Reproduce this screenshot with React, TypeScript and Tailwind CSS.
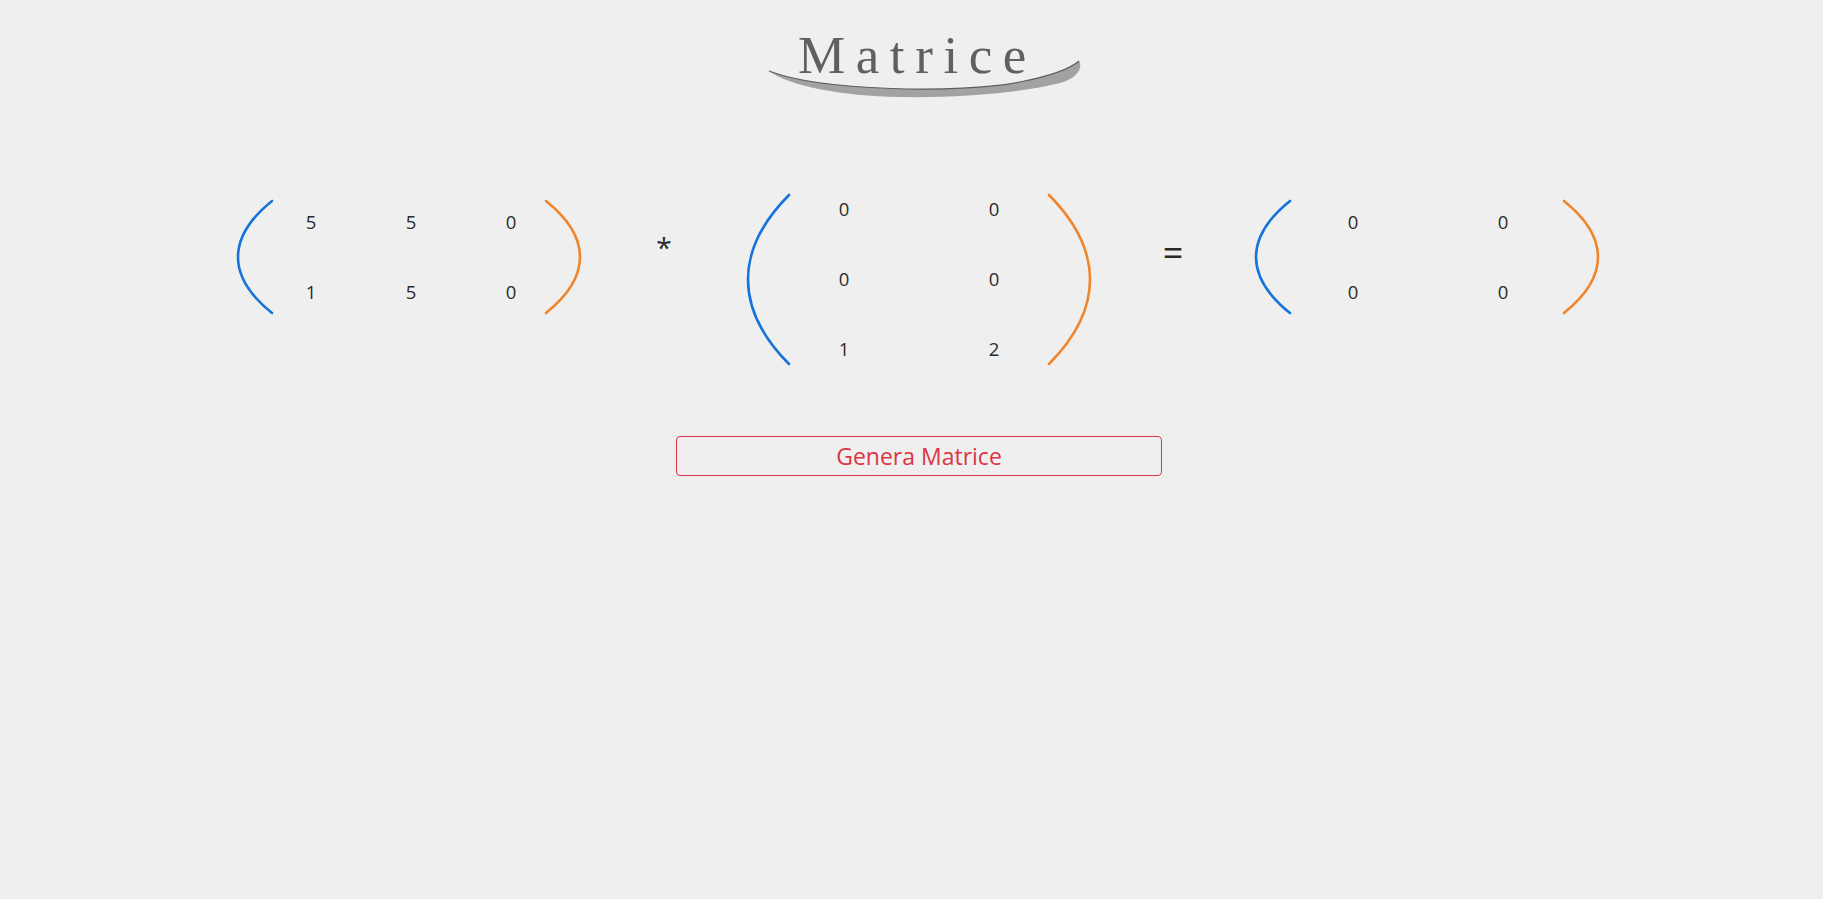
import React from 'react'

type ParenProps = {
  width: number
  height: number
  color: string
  side: 'left' | 'right'
}

// parentesi disegnata come curva cubica
function Paren({ width, height, color, side }: ParenProps) {
  const pad = 2
  const edge = side === 'left' ? width - pad : pad
  const tip = side === 'left' ? pad : width - pad
  const ctrl = (tip - 0.25 * edge) / 0.75
  const y1 = height * 0.33
  const y2 = height * 0.67
  const d = `M ${edge} ${pad} C ${ctrl} ${y1} ${ctrl} ${y2} ${edge} ${height - pad}`
  return (
    <svg width={width} height={height} className="shrink-0">
      <path d={d} fill="none" stroke={color} strokeWidth={2.6} strokeLinecap="round" />
    </svg>
  )
}

const BLUE = '#1573dc'
const ORANGE = '#f0862c'

type MatrixProps = {
  rows: number[][]
  parenW: number
  parenH: number
  width: number
  padLeft: string
  gap: string
  className?: string
}

function Matrix({ rows, parenW, parenH, width, padLeft, gap, className }: MatrixProps) {
  return (
    <div className={`flex items-center shrink-0 ${className ?? ''}`} style={{ width }}>
      <Paren width={parenW} height={parenH} color={BLUE} side="left" />
      <div className={`flex-1 flex flex-col ${padLeft}`}>
        {rows.map((row, i) => (
          <div key={i} className={`flex h-[70px] items-center ${gap}`}>
            {row.map((v, j) => (
              <span key={j} className="w-[24px] text-center">
                {v}
              </span>
            ))}
          </div>
        ))}
      </div>
      <Paren width={parenW} height={parenH} color={ORANGE} side="right" />
    </div>
  )
}

export default function App() {
  return (
    <div
      className="min-h-screen w-full bg-[#efefef] text-[#2b2b2b]"
      style={{ fontFamily: '"Segoe UI", "Open Sans", "Noto Sans", sans-serif' }}
    >
      {/* titolo */}
      <div className="flex justify-center pt-[29px]">
        <div className="relative pl-[12px]">
          <svg
            width={330}
            height={50}
            className="absolute left-[-26px] top-[22px]"
            viewBox="0 0 330 50"
          >
            <path
              d="M9 20 C60 40 200 43 260 31 C290 25 310 18 319 10 C323 16 318 27 300 32 C260 42 200 47 140 46 C80 45 30 35 9 20 Z"
              fill="#a2a2a2"
            />
            <path
              d="M9 20 C60 40 200 43 260 31 C290 25 310 18 319 10"
              fill="none"
              stroke="#5e5e5e"
              strokeWidth={1.2}
            />
          </svg>
          <h1
            className="relative text-[53px] leading-[53px] tracking-[0.2em] text-[#606060]"
            style={{ fontFamily: '"Liberation Serif", "Times New Roman", serif' }}
          >
            Matrice
          </h1>
        </div>
      </div>

      {/* matrici */}
      <div className="flex justify-center items-start pl-[13px] mt-[92px] text-[18.5px]">
        <Matrix
          rows={[
            [5, 5, 0],
            [1, 5, 0],
          ]}
          parenW={38}
          parenH={116}
          width={346}
          padLeft="pl-[25px]"
          gap="gap-x-[76px]"
          className="mt-[13px]"
        />
        <div className="w-[164px] shrink-0 text-center text-[28px] leading-[28px] mt-[59px]">*</div>
        <Matrix
          rows={[
            [0, 0],
            [0, 0],
            [1, 2],
          ]}
          parenW={45}
          parenH={173}
          width={346}
          padLeft="pl-[41px]"
          gap="gap-x-[126px]"
        />
        <div className="w-[162px] shrink-0 text-center text-[36px] leading-[36px] mt-[61px]">=</div>
        <Matrix
          rows={[
            [0, 0],
            [0, 0],
          ]}
          parenW={38}
          parenH={116}
          width={346}
          padLeft="pl-[49px]"
          gap="gap-x-[126px]"
          className="mt-[13px]"
        />
      </div>

      {/* bottone */}
      <div className="flex justify-center pl-[15px] mt-[52px]">
        <button className="w-[486px] h-[40px] rounded-[4px] border border-[#dc3545] text-[#dc3545] text-[23px] leading-none flex items-center justify-center">
          Genera Matrice
        </button>
      </div>
    </div>
  )
}
